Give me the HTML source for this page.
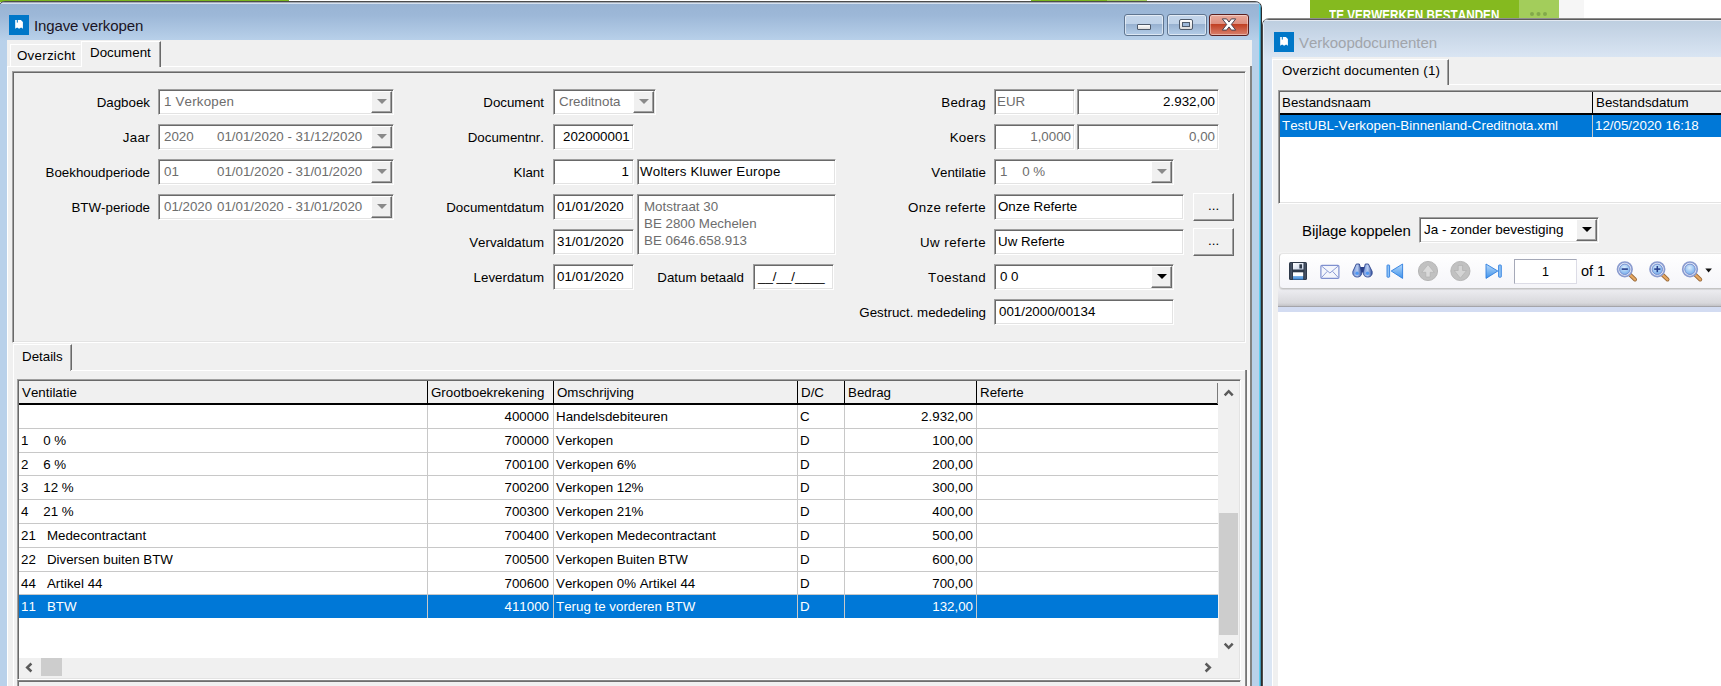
<!DOCTYPE html>
<html lang="nl">
<head>
<meta charset="utf-8">
<title>Ingave verkopen</title>
<style>
*{box-sizing:border-box;margin:0;padding:0}
html,body{width:1721px;height:686px;overflow:hidden;background:#fff}
body{position:relative;font-family:"Liberation Sans",Arial,sans-serif;font-size:13.33px;color:#000;line-height:16px;font-kerning:none;font-variant-ligatures:none}
.a{position:absolute}
.t{position:absolute;white-space:pre;line-height:16px;height:16px}
.r{text-align:right}
.g{color:#6d6d6d}
/* sunken field */
.f{position:absolute;background:#fff;border:1px solid;border-color:#a0a0a0 #fff #fff #a0a0a0;box-shadow:inset 1px 1px 0 #696969,inset -1px -1px 0 #e3e3e3;white-space:pre;overflow:hidden;padding:4px 0 0 5px;line-height:16px}
.f.rt{text-align:right;padding-right:5px}
/* raised button */
.b{position:absolute;background:#f0f0f0;border:1px solid;border-color:#fff #696969 #696969 #fff;box-shadow:inset -1px -1px 0 #a0a0a0,inset 1px 1px 0 #f0f0f0}
.cb{position:absolute;top:1px;right:1px;bottom:1px;width:21px;background:#f0f0f0;border:1px solid;border-color:#fff #696969 #696969 #fff;box-shadow:inset -1px -1px 0 #a0a0a0}
.cb i{position:absolute;left:5px;top:7px;width:0;height:0;border-left:5px solid transparent;border-right:5px solid transparent;border-top:5px solid #8a8a8a}
.cb.k i{border-top-color:#000}
/* sunken panel */
.p{position:absolute;border:1px solid;border-color:#a0a0a0 #fff #fff #a0a0a0;box-shadow:inset 1px 1px 0 #696969,inset -1px -1px 0 #e3e3e3}
.sel{background:#0078d7;color:#fff}
</style>
</head>
<body>

<!-- ===== background page bits (behind windows) ===== -->
<div class="a" style="left:0;top:0;width:289px;height:2px;background:#7ab51d"></div>
<div class="a" style="left:1031px;top:0;width:76px;height:2px;background:#7ab51d"></div>
<div class="a" style="left:1107px;top:0;width:40px;height:2px;background:#a2cd5a"></div>
<div class="a" style="left:1310px;top:0;width:209px;height:22px;background:#85ba1f"></div>
<div class="a" style="left:1519px;top:0;width:40px;height:22px;background:#a3cd5b"></div>
<div class="a" style="left:1559px;top:0;width:25px;height:22px;background:#f6f6f6"></div>
<div class="t" id="tvb" style="left:1329px;top:6px;color:#fff;font-weight:bold;font-size:15.5px;line-height:18px;height:18px;letter-spacing:0px;transform-origin:0 0;transform:scaleX(.755)">TE VERWERKEN BESTANDEN</div>
<div class="a" style="left:1530px;top:12px;width:4px;height:4px;border-radius:2px;background:#82a94a;box-shadow:6.500px 0 0 #82a94a,13px 0 0 #82a94a"></div>

<!-- ===== second window: Verkoopdocumenten ===== -->
<div id="w2" class="a" style="left:1262px;top:18px;width:480px;height:700px;border:1px solid #4a4a4a;border-top-color:#8e8e8e;border-radius:7px 0 0 0;background:#dbe6f4;overflow:hidden">
  <div class="a" style="left:0;top:0;width:480px;height:40px;background:linear-gradient(#bccddf,#dbe6f4)"></div>
  <div class="a" style="left:0;top:0;width:480px;height:1px;background:#5c5c5c"></div>
  <div class="a" style="left:0;top:1px;width:480px;height:1px;background:#e3e9f2"></div>
  <div class="a" style="left:0;top:3px;width:1px;height:700px;background:#e6eef7"></div>
</div>
<div class="a" style="left:1272px;top:57px;width:460px;height:641px;background:#f0f0f0"></div>

<!-- second window content -->
<svg class="a" style="left:1274px;top:32px" width="20" height="20" viewBox="0 0 20 20"><rect width="20" height="20" fill="#0077c8"/><path d="M6.200 5h5.700l2 2v6.700l-1.800-1.100-2 1.100-2-1.100-1.900 1.100z" fill="#fff"/><path d="M8.300 5v2.600" stroke="#0077c8" stroke-width="1"/></svg>
<div class="t" id="ttl2" style="left:1299px;top:33px;font-size:15px;line-height:20px;height:20px;color:#a1a5ab;letter-spacing:-.02px">Verkoopdocumenten</div>
<div class="a" style="left:1272px;top:84px;width:460px;height:1px;background:#fff"></div>
<div class="a" style="left:1272px;top:59px;width:177px;height:26px;background:#f0f0f0;border-left:1px solid #fff;border-top:1px solid #fff;border-right:1px solid #696969;box-shadow:inset -1px 0 0 #a0a0a0"></div>
<div class="t" id="tab2" style="left:1282px;top:63px;letter-spacing:.2px">Overzicht documenten (1)</div>
<div class="a" style="left:1272px;top:85px;width:1px;height:620px;background:#fff"></div>
<!-- file grid -->
<div class="p" style="left:1278px;top:90px;width:460px;height:114px;background:#fff"></div>
<div class="a" style="left:1280px;top:92px;width:450px;height:22px;background:#f0f0f0"></div>
<div class="a" style="left:1280px;top:113px;width:450px;height:2px;background:#000"></div>
<div class="a" style="left:1592px;top:92px;width:1px;height:22px;background:#000"></div>
<div class="t" style="left:1282px;top:95px">Bestandsnaam</div>
<div class="t" style="left:1596px;top:95px">Bestandsdatum</div>
<div class="a sel" style="left:1280px;top:115px;width:450px;height:22px"></div>
<div class="a" style="left:1592px;top:115px;width:1px;height:22px;background:#c8c8c8"></div>
<div class="t" style="left:1282px;top:118px;color:#fff;letter-spacing:.03px">TestUBL-Verkopen-Binnenland-Creditnota.xml</div>
<div class="t" style="left:1595px;top:118px;color:#fff">12/05/2020 16:18</div>
<!-- bijlage koppelen -->
<div class="t" id="bk" style="left:1302px;top:221px;font-size:15px;letter-spacing:-.08px;line-height:20px;height:20px">Bijlage koppelen</div>
<div class="f" id="bkc" style="left:1419px;top:217px;width:180px;height:26px;padding-left:4px;font-size:13.5px">Ja - zonder bevestiging<div class="cb k"><i></i></div></div>
<!-- report viewer -->
<div class="a" style="left:1278px;top:252px;width:460px;height:55px;background:linear-gradient(#f4f4f4 0,#f0f0f0 36px,#ececf0 38px,#d8d8dc 51px,#c6c6ca 53.500px,#94949a 55px)"></div>
<div class="a" style="left:1278px;top:307px;width:460px;height:5px;background:#d3dcf2"></div>
<div class="a" style="left:1278px;top:312px;width:460px;height:400px;background:#fff"></div>
<div class="a" id="tb" style="left:1279px;top:253px;width:470px;height:36px;border:1px solid;border-color:#e6e6e6 #d0d0d0 #c4c4c4 #d0d0d0;border-radius:4px;background:linear-gradient(#ffffff,#f5f5f9);box-shadow:0 1px 1px rgba(0,0,0,.10)"></div>
<!-- toolbar icons -->
<svg class="a" style="left:1278px;top:252px" width="443" height="38" viewBox="1278 252 443 38">
<defs>
<linearGradient id="gsv" x1="0" y1="0" x2="0" y2="1"><stop offset="0" stop-color="#fff"/><stop offset=".45" stop-color="#fff"/><stop offset=".55" stop-color="#7db4ea"/><stop offset="1" stop-color="#3b86d6"/></linearGradient>
<linearGradient id="glb" x1="0" y1="0" x2="1" y2="1"><stop offset="0" stop-color="#fff"/><stop offset="1" stop-color="#c3d0e6"/></linearGradient>
<linearGradient id="gtr" x1="0" y1="0" x2="0" y2="1"><stop offset="0" stop-color="#b7d9fa"/><stop offset="1" stop-color="#3f92ea"/></linearGradient>
<radialGradient id="gln" cx=".45" cy=".35" r=".7"><stop offset="0" stop-color="#dcecfb"/><stop offset="1" stop-color="#6eaaec"/></radialGradient>
<radialGradient id="gcr" cx=".5" cy=".5" r=".5"><stop offset="0" stop-color="#c0c0c0"/><stop offset=".85" stop-color="#bababa"/><stop offset="1" stop-color="#adadad"/></radialGradient>
<linearGradient id="gbn" x1="0" y1="0" x2="1" y2="0"><stop offset="0" stop-color="#6d8fd6"/><stop offset=".5" stop-color="#b9cdf2"/><stop offset="1" stop-color="#2f4d9c"/></linearGradient>
</defs>
<!-- save -->
<rect x="1289" y="262" width="18" height="18" rx="1.5" fill="#2e3949"/>
<rect x="1290.6" y="263" width="1" height="16" fill="#556175"/><rect x="1304.6" y="263" width="1" height="16" fill="#556175"/>
<rect x="1293" y="263" width="10.5" height="6.5" fill="url(#glb)"/>
<rect x="1299.4" y="264.3" width="2.6" height="4.2" fill="#2e3949"/>
<rect x="1293" y="272.3" width="10.2" height="7.2" fill="url(#gsv)"/>
<!-- mail -->
<rect x="1320.9" y="265.3" width="18" height="13" rx="1" fill="#f4f6fc" stroke="#7f90cf" stroke-width="1.2"/>
<path d="M1321.3 265.8L1329.9 273L1338.5 265.8M1321.3 277.8L1327.3 271.3M1338.5 277.8L1332.5 271.3" fill="none" stroke="#8e9dd6" stroke-width="1"/>
<!-- binoculars -->
<rect x="1360" y="267" width="4.600" height="5.500" fill="#2a3f86"/>
<path d="M1356.300 264h3l2.300 7.400c.6 3.400-1.200 5.600-4.300 5.600s-5-2.200-4.400-5.600z" fill="url(#gbn)" stroke="#2c448c" stroke-width=".9"/>
<path d="M1365.300 264h3.100l3.700 7.400c.6 3.400-1.200 5.600-4.300 5.600s-5-2.200-4.400-5.600z" fill="url(#gbn)" stroke="#2c448c" stroke-width=".9"/>
<circle cx="1357.100" cy="273.300" r="1.700" fill="#4f97f2"/><circle cx="1367.500" cy="273.300" r="1.700" fill="#4f97f2"/>
<!-- first -->
<rect x="1387" y="265" width="2.6" height="12.2" rx=".6" fill="#8fc3f6" stroke="#2f7fe0" stroke-width=".9"/>
<path d="M1391.2 271L1402.6 264v14.400z" fill="url(#gtr)" stroke="#2f7fe0" stroke-width=".9" stroke-linejoin="round"/>
<!-- up -->
<circle cx="1428" cy="271" r="9.600" fill="#c1c1c1" stroke="#b1b1b1" stroke-width=".9"/>
<path d="M1428 264.600l6.200 7.700h-4v4.700h-4.400v-4.700h-4z" fill="#dadada" stroke="#b2b2b2" stroke-width=".7"/>
<!-- down -->
<circle cx="1460.400" cy="271" r="9.600" fill="#c1c1c1" stroke="#b1b1b1" stroke-width=".9"/>
<path d="M1460.400 278.200l6.200-7.700h-4v-5.100h-4.400v5.100h-4z" fill="#d4d4d4" stroke="#b0b0b0" stroke-width=".7"/>
<!-- last -->
<path d="M1497.800 271L1486 264v14.400z" fill="url(#gtr)" stroke="#2f7fe0" stroke-width=".9" stroke-linejoin="round"/>
<rect x="1498.600" y="265" width="2.700" height="12.2" rx=".6" fill="#8fc3f6" stroke="#2f7fe0" stroke-width=".9"/>
<!-- zoom out / in / zoom -->
<g id="mag"><path d="M1629.800 274.500l5.200 5" stroke="#9a6a3a" stroke-width="4" stroke-linecap="round"/><path d="M1629.800 274.500l5.200 5" stroke="#e6a862" stroke-width="2.400" stroke-linecap="round"/>
<circle cx="1624.800" cy="269.300" r="7.300" fill="#e9eef9" stroke="#8a9bcf" stroke-width="1.700"/><circle cx="1624.800" cy="269.300" r="5.200" fill="url(#gln)" stroke="#7890d0" stroke-width="1"/></g>
<rect x="1621.700" y="268.300" width="6.200" height="1.600" fill="#27408f"/>
<use href="#mag" x="32.500"/>
<rect x="1654.200" y="268.300" width="6.200" height="1.600" fill="#27408f"/><rect x="1656.500" y="266" width="1.600" height="6.200" fill="#27408f"/>
<use href="#mag" x="65.200"/>
<path d="M1705.300 268.600h6.600l-3.300 3.800z" fill="#111"/>
</svg>
<div class="a" style="left:1514px;top:259px;width:63px;height:25px;background:#fff;border:1px solid;border-color:#a5a9b8 #dcdce6 #dcdce6 #a5a9b8"></div>
<div class="t" style="left:1514px;width:63px;top:264px;text-align:center;font-size:12.5px">1</div>
<div class="t" id="of1" style="left:1581px;top:263px;font-size:14.5px">of 1</div>
<!-- ===== main window: Ingave verkopen ===== -->
<div id="w1" class="a" style="left:-2px;top:1px;width:1264px;height:720px;border:1px solid #4c4c4c;border-right-color:#2b2b2b;border-radius:7px 7px 0 0;background:#b9d1ea;overflow:hidden">
  <div class="a" style="left:0;top:0;width:1264px;height:39px;background:linear-gradient(#98b3d3 0,#9db8d8 35%,#b9d1ea 100%)"></div>
  <div class="a" style="left:0;top:0;width:1264px;height:1px;background:#a4abb5"></div>
  <div class="a" style="left:0;top:1px;width:1264px;height:1px;background:#d6e1ef"></div>
  <div class="a" style="right:1px;top:0;width:1px;height:720px;background:#5fcdee"></div><div class="a" style="right:0;top:0;width:1px;height:720px;background:#3f93b3"></div>
</div>
<div class="a" style="left:7px;top:40px;width:1245px;height:660px;background:#f0f0f0"></div>
<div class="a" style="left:1250px;top:66px;width:2px;height:640px;background:#828282"></div>

<!-- title bar content -->
<svg class="a" style="left:9px;top:15px" width="20" height="20" viewBox="0 0 20 20"><rect width="20" height="20" fill="#0077c8"/><path d="M6.200 5h5.700l2 2v6.700l-1.800-1.100-2 1.100-2-1.100-1.900 1.100z" fill="#fff"/><path d="M8.300 5v2.600" stroke="#0077c8" stroke-width="1"/></svg>
<div class="t" id="ttl1" style="left:34px;top:16px;font-size:15px;line-height:20px;height:20px;color:#1a1424;letter-spacing:-.12px">Ingave verkopen</div>

<!-- caption buttons -->
<div class="a" style="left:1124px;top:14px;width:40px;height:22px;border:1px solid #5f7590;border-radius:3px;background:linear-gradient(#c3d5ea 0,#bfd2e8 45%,#97b1d0 46%,#b4cde8 100%);box-shadow:inset 0 0 0 1px rgba(255,255,255,.55)"><div class="a" style="left:12px;top:9px;width:14px;height:6px;border:1px solid #4e5a6b;border-radius:1px;background:linear-gradient(#fff,#dcdcdc)"></div></div>
<div class="a" style="left:1167px;top:14px;width:40px;height:22px;border:1px solid #5f7590;border-radius:3px;background:linear-gradient(#c3d5ea 0,#bfd2e8 45%,#97b1d0 46%,#b4cde8 100%);box-shadow:inset 0 0 0 1px rgba(255,255,255,.55)"><div class="a" style="left:11px;top:4px;width:14px;height:11px;border:1px solid #4e5a6b;border-radius:2px;background:linear-gradient(#fff,#dcdcdc)"><div class="a" style="left:2px;top:2px;width:8px;height:5px;border:1px solid #4e5a6b;background:#9db8d8"></div></div></div>
<div class="a" style="left:1209px;top:14px;width:40px;height:22px;border:1px solid #5a1f1f;border-radius:3px;background:linear-gradient(#e9a99b 0,#dd8f7f 45%,#c03f22 46%,#d9806c 100%);box-shadow:inset 0 0 0 1px rgba(255,255,255,.4)"><svg class="a" style="left:11px;top:3px" width="16" height="14" viewBox="0 0 16 14"><path d="M1.300 .9h4.300L8 4.100l2.400-3.200h4.300L10.300 6.500l4.400 5.600h-4.300L8 8.900l-2.400 3.200H1.300l4.400-5.600z" fill="#fff" stroke="#4a4452" stroke-width="1" stroke-linejoin="round"/></svg></div>

<!-- tab strip of main window -->
<div class="a" style="left:7px;top:66px;width:1243px;height:1px;background:#fff"></div>
<div class="a" style="left:7px;top:66px;width:1px;height:640px;background:#fff"></div>
<div class="a" style="left:10px;top:44px;width:71px;height:22px;border:1px solid;border-color:#fff #f0f0f0 #f0f0f0 #fff;border-bottom:0"></div>
<div class="t" style="left:17px;top:48px;letter-spacing:.25px">Overzicht</div>
<div class="a" style="left:81px;top:41px;width:80px;height:26px;background:#f0f0f0;border-left:1px solid #fff;border-top:1px solid #fff;border-right:1px solid #696969;box-shadow:inset -1px 0 0 #a0a0a0"></div>
<div class="t" style="left:90px;top:45px">Document</div>

<!-- document panel -->
<div class="p" style="left:12px;top:71px;width:1234px;height:272px"></div>

<!-- form: left column -->
<div class="t r" style="left:0;width:150px;top:95px">Dagboek</div>
<div class="f g" style="left:158px;top:89px;width:236px;height:26px;letter-spacing:.2px">1 Verkopen<div class="cb"><i></i></div></div>
<div class="t r" style="left:0;width:150px;top:130px;letter-spacing:.3px">Jaar</div>
<div class="f g" style="left:158px;top:124px;width:236px;height:26px">2020<span class="a" style="left:58px;top:4px">01/01/2020 - 31/12/2020</span><div class="cb"><i></i></div></div>
<div class="t r" style="left:0;width:150px;top:165px">Boekhoudperiode</div>
<div class="f g" style="left:158px;top:159px;width:236px;height:26px">01<span class="a" style="left:58px;top:4px">01/01/2020 - 31/01/2020</span><div class="cb"><i></i></div></div>
<div class="t r" style="left:0;width:150px;top:200px">BTW-periode</div>
<div class="f g" style="left:158px;top:194px;width:236px;height:26px">01/2020<span class="a" style="left:58px;top:4px">01/01/2020 - 31/01/2020</span><div class="cb"><i></i></div></div>

<!-- form: middle column -->
<div class="t r" style="left:0;width:544px;top:95px">Document</div>
<div class="f g" style="left:553px;top:89px;width:103px;height:26px">Creditnota<div class="cb"><i></i></div></div>
<div class="t r" style="left:0;width:544px;top:130px">Documentnr.</div>
<div class="f" style="left:553px;top:124px;width:81px;height:26px;padding-left:9px">202000001</div>
<div class="t r" style="left:0;width:544px;top:165px">Klant</div>
<div class="f rt" style="left:553px;top:159px;width:81px;height:26px;padding-right:4px">1</div>
<div class="f" style="left:637px;top:159px;width:199px;height:26px;padding-left:2px;letter-spacing:.2px">Wolters Kluwer Europe</div>
<div class="t r" style="left:0;width:544px;top:200px">Documentdatum</div>
<div class="f" style="left:553px;top:194px;width:81px;height:26px;padding-left:3px">01/01/2020</div>
<div class="f g" style="left:637px;top:194px;width:199px;height:61px;padding-left:6px;padding-top:3px;line-height:17px">Motstraat 30
BE 2800 Mechelen
BE 0646.658.913</div>
<div class="t r" style="left:0;width:544px;top:235px">Vervaldatum</div>
<div class="f" style="left:553px;top:229px;width:81px;height:26px;padding-left:3px">31/01/2020</div>
<div class="t r" style="left:0;width:544px;top:270px">Leverdatum</div>
<div class="f" style="left:553px;top:264px;width:81px;height:26px;padding-left:3px">01/01/2020</div>
<div class="t r" style="left:0;width:744px;top:270px">Datum betaald</div>
<div class="f" style="left:753px;top:264px;width:81px;height:26px;padding-left:4px">__/__/____</div>

<!-- form: right column -->
<div class="t r" style="left:0;width:986px;top:95px;letter-spacing:.3px">Bedrag</div>
<div class="f g" style="left:994px;top:89px;width:81px;height:26px;padding-left:2px">EUR</div>
<div class="f rt" style="left:1077px;top:89px;width:142px;height:26px;padding-right:3px">2.932,00</div>
<div class="t r" style="left:0;width:986px;top:130px;letter-spacing:.3px">Koers</div>
<div class="f g rt" style="left:994px;top:124px;width:81px;height:26px;padding-right:3px">1,0000</div>
<div class="f g rt" style="left:1077px;top:124px;width:142px;height:26px;padding-right:3px">0,00</div>
<div class="t r" style="left:0;width:986px;top:165px">Ventilatie</div>
<div class="f g" style="left:994px;top:159px;width:180px;height:26px">1    0 %<div class="cb"><i></i></div></div>
<div class="t r" style="left:0;width:986px;top:200px;letter-spacing:.33px">Onze referte</div>
<div class="f" style="left:994px;top:194px;width:190px;height:26px;padding-left:3px">Onze Referte</div>
<div class="b" style="left:1193px;top:193px;width:41px;height:28px"></div><div class="t" style="left:1208px;top:198px">...</div>
<div class="t r" style="left:0;width:986px;top:235px;letter-spacing:.45px">Uw referte</div>
<div class="f" style="left:994px;top:229px;width:190px;height:26px;padding-left:3px">Uw Referte</div>
<div class="b" style="left:1193px;top:228px;width:41px;height:28px"></div><div class="t" style="left:1208px;top:233px">...</div>
<div class="t r" style="left:0;width:986px;top:270px;letter-spacing:.3px">Toestand</div>
<div class="f" style="left:994px;top:264px;width:180px;height:26px">0 0<div class="cb k"><i></i></div></div>
<div class="t r" style="left:0;width:986px;top:305px">Gestruct. mededeling</div>
<div class="f" style="left:994px;top:299px;width:180px;height:26px;padding-left:4px">001/2000/00134</div>

<!-- Details tab -->
<div class="a" style="left:13px;top:344px;width:59px;height:27px;border-left:1px solid #fff;border-top:1px solid #fff;border-right:1px solid #696969;box-shadow:inset -1px 0 0 #a0a0a0"></div>
<div class="t" style="left:22px;top:349px">Details</div>
<div class="a" style="left:71px;top:370px;width:1175px;height:1px;background:#fff"></div>
<div class="a" style="left:13px;top:370px;width:1px;height:330px;background:#fff"></div>
<div class="a" style="left:1241px;top:380px;width:4px;height:330px;background:#f5f5f5"></div>
<div class="a" style="left:1247px;top:370px;width:3px;height:330px;background:#f8f8f8"></div>
<div class="a" style="left:1245px;top:370px;width:2px;height:330px;background:linear-gradient(90deg,#8c8c8c 50%,#757575 50%)"></div>

<!-- grid -->
<div class="p" style="left:17px;top:379px;width:1224px;height:301px;background:#fff"></div>
<div class="a" id="grid" style="left:19px;top:381px;width:1199px;height:277px;background:#fff;overflow:hidden">
<div class="a" style="left:0;top:0;width:1199px;height:22px;background:#f0f0f0"></div>
<div class="a" style="left:0;top:22px;width:1199px;height:2px;background:#000"></div>
<div class="a" style="left:1198px;top:2px;width:1px;height:21px;background:#7a7a7a"></div>
<div class="t" style="left:3px;top:4px">Ventilatie</div><div class="a" style="left:408px;top:0;width:1px;height:23px;background:#000"></div>
<div class="t" style="left:412px;top:4px">Grootboekrekening</div><div class="a" style="left:534px;top:0;width:1px;height:23px;background:#000"></div>
<div class="t" style="left:538px;top:4px">Omschrijving</div><div class="a" style="left:778px;top:0;width:1px;height:23px;background:#000"></div>
<div class="t" style="left:782px;top:4px">D/C</div><div class="a" style="left:825px;top:0;width:1px;height:23px;background:#000"></div>
<div class="t" style="left:829px;top:4px">Bedrag</div><div class="a" style="left:957px;top:0;width:1px;height:23px;background:#000"></div>
<div class="t" style="left:961px;top:4px">Referte</div><div class="a" style="left:0;top:47px;width:1199px;height:1px;background:#c8c8c8"></div>
<div class="t" style="left:2px;top:28px"></div><div class="t r" style="left:409px;width:121px;top:28px">400000</div><div class="t" style="left:537px;top:28px">Handelsdebiteuren</div><div class="t" style="left:781px;top:28px">C</div><div class="t r" style="left:826px;width:128px;top:28px">2.932,00</div>
<div class="a" style="left:0;top:71px;width:1199px;height:1px;background:#c8c8c8"></div>
<div class="t" style="left:2px;top:52px">1    0 %</div><div class="t r" style="left:409px;width:121px;top:52px">700000</div><div class="t" style="left:537px;top:52px">Verkopen</div><div class="t" style="left:781px;top:52px">D</div><div class="t r" style="left:826px;width:128px;top:52px">100,00</div>
<div class="a" style="left:0;top:94px;width:1199px;height:1px;background:#c8c8c8"></div>
<div class="t" style="left:2px;top:76px">2    6 %</div><div class="t r" style="left:409px;width:121px;top:76px">700100</div><div class="t" style="left:537px;top:76px">Verkopen 6%</div><div class="t" style="left:781px;top:76px">D</div><div class="t r" style="left:826px;width:128px;top:76px">200,00</div>
<div class="a" style="left:0;top:118px;width:1199px;height:1px;background:#c8c8c8"></div>
<div class="t" style="left:2px;top:99px">3    12 %</div><div class="t r" style="left:409px;width:121px;top:99px">700200</div><div class="t" style="left:537px;top:99px">Verkopen 12%</div><div class="t" style="left:781px;top:99px">D</div><div class="t r" style="left:826px;width:128px;top:99px">300,00</div>
<div class="a" style="left:0;top:142px;width:1199px;height:1px;background:#c8c8c8"></div>
<div class="t" style="left:2px;top:123px">4    21 %</div><div class="t r" style="left:409px;width:121px;top:123px">700300</div><div class="t" style="left:537px;top:123px">Verkopen 21%</div><div class="t" style="left:781px;top:123px">D</div><div class="t r" style="left:826px;width:128px;top:123px">400,00</div>
<div class="a" style="left:0;top:166px;width:1199px;height:1px;background:#c8c8c8"></div>
<div class="t" style="left:2px;top:147px">21   Medecontractant</div><div class="t r" style="left:409px;width:121px;top:147px">700400</div><div class="t" style="left:537px;top:147px">Verkopen Medecontractant</div><div class="t" style="left:781px;top:147px">D</div><div class="t r" style="left:826px;width:128px;top:147px">500,00</div>
<div class="a" style="left:0;top:190px;width:1199px;height:1px;background:#c8c8c8"></div>
<div class="t" style="left:2px;top:171px">22   Diversen buiten BTW</div><div class="t r" style="left:409px;width:121px;top:171px">700500</div><div class="t" style="left:537px;top:171px">Verkopen Buiten BTW</div><div class="t" style="left:781px;top:171px">D</div><div class="t r" style="left:826px;width:128px;top:171px">600,00</div>
<div class="a" style="left:0;top:213px;width:1199px;height:1px;background:#c8c8c8"></div>
<div class="t" style="left:2px;top:195px">44   Artikel 44</div><div class="t r" style="left:409px;width:121px;top:195px">700600</div><div class="t" style="left:537px;top:195px">Verkopen 0% Artikel 44</div><div class="t" style="left:781px;top:195px">D</div><div class="t r" style="left:826px;width:128px;top:195px">700,00</div>
<div class="a sel" style="left:0;top:214px;width:1199px;height:23px"></div>
<div class="t" style="color:#fff;left:2px;top:218px">11   BTW</div><div class="t r" style="color:#fff;left:409px;width:121px;top:218px">411000</div><div class="t" style="color:#fff;left:537px;top:218px">Terug te vorderen BTW</div><div class="t" style="color:#fff;left:781px;top:218px">D</div><div class="t r" style="color:#fff;left:826px;width:128px;top:218px">132,00</div>
<div class="a" style="left:408px;top:24px;width:1px;height:213px;background:#c8c8c8"></div>
<div class="a" style="left:534px;top:24px;width:1px;height:213px;background:#c8c8c8"></div>
<div class="a" style="left:778px;top:24px;width:1px;height:213px;background:#c8c8c8"></div>
<div class="a" style="left:825px;top:24px;width:1px;height:213px;background:#c8c8c8"></div>
<div class="a" style="left:957px;top:24px;width:1px;height:213px;background:#c8c8c8"></div>
</div>
<div class="a" style="left:1218px;top:381px;width:21px;height:297px;background:#f0f0f0"></div>
<div class="a" style="left:1219px;top:513px;width:19px;height:122px;background:#cdcdcd"></div>
<svg class="a" style="left:1223px;top:389px" width="11" height="8" viewBox="0 0 11 8"><path d="M1.700 6.400L5.700 2.200L9.700 6.400" fill="none" stroke="#5a5a5a" stroke-width="2.500"/></svg>
<svg class="a" style="left:1223px;top:642px" width="11" height="8" viewBox="0 0 11 8"><path d="M1.700 1.600L5.700 5.800L9.700 1.600" fill="none" stroke="#5a5a5a" stroke-width="2.500"/></svg>
<div class="a" style="left:19px;top:658px;width:1199px;height:20px;background:#f0f0f0"></div>
<div class="a" style="left:41px;top:658px;width:21px;height:18px;background:#cdcdcd"></div>
<svg class="a" style="left:25px;top:662px" width="8" height="11" viewBox="0 0 8 11"><path d="M6.400 1.500L2.200 5.500L6.400 9.500" fill="none" stroke="#5a5a5a" stroke-width="2.500"/></svg>
<svg class="a" style="left:1204px;top:662px" width="8" height="11" viewBox="0 0 8 11"><path d="M1.600 1.500L5.800 5.500L1.600 9.500" fill="none" stroke="#5a5a5a" stroke-width="2.500"/></svg>
<!-- panel below grid -->
<div class="p" style="left:17px;top:680px;width:1224px;height:40px;border-top-color:#858585;border-right-color:#f0f0f0;box-shadow:inset 1px 1px 0 #6e6e6e"></div>

</body>
</html>
